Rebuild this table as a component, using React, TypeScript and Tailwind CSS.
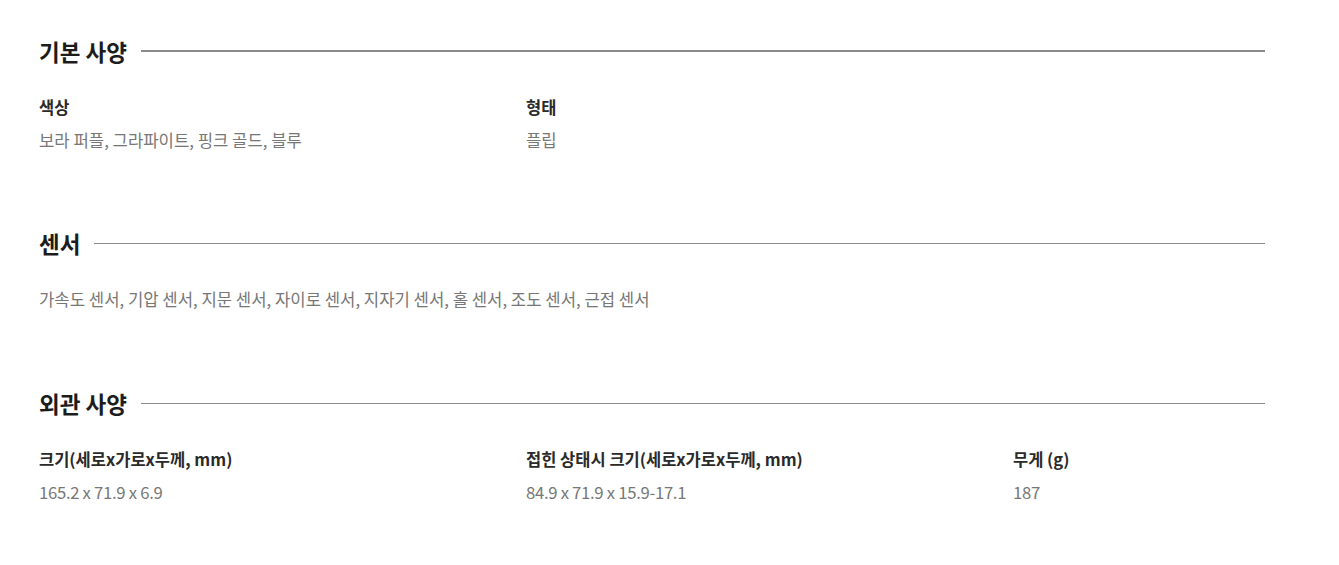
const font = { fontFamily: '"Noto Sans CJK KR", "Noto Sans", sans-serif' }

interface SpecItem {
  label: string
  value: string
  numeric?: boolean
}

function SectionTitle({ title, thick }: { title: string; thick?: boolean }) {
  return (
    <div className="flex items-center">
      <h2 className="text-[22.5px] leading-[28px] font-bold text-[#1c1c1c]">{title}</h2>
      <div className={`flex-1 ml-[14px] bg-[#8a8a8a] ${thick ? 'h-[2px]' : 'h-px'}`} />
    </div>
  )
}

function SpecGrid({ items }: { items: SpecItem[] }) {
  return (
    <div className="grid grid-cols-[487px_487px_1fr] mt-[30px]">
      {items.map((item) => (
        <div key={item.label}>
          <div className="text-[16.5px] leading-6 font-bold text-[#2a2a2a]">{item.label}</div>
          <div
            className={`mt-[9px] text-[16.7px] leading-6 text-[#777] ${item.numeric ? 'tracking-[-0.3px]' : ''}`}
          >
            {item.value}
          </div>
        </div>
      ))}
    </div>
  )
}

export default function App() {
  return (
    <div className="bg-white w-[1339px] h-[565px] pl-[39px] pr-[74px] pt-[37px]" style={font}>
      <section>
        <SectionTitle title="기본 사양" thick />
        <SpecGrid
          items={[
            { label: '색상', value: '보라 퍼플, 그라파이트, 핑크 골드, 블루' },
            { label: '형태', value: '플립' },
          ]}
        />
      </section>

      <section className="mt-[77px]">
        <SectionTitle title="센서" />
        <p className="mt-[30px] text-[16.7px] leading-6 text-[#777]">
          가속도 센서, 기압 센서, 지문 센서, 자이로 센서, 지자기 센서, 홀 센서, 조도 센서, 근접 센서
        </p>
      </section>

      <section className="mt-[78px]">
        <SectionTitle title="외관 사양" />
        <SpecGrid
          items={[
            { label: '크기(세로x가로x두께, mm)', value: '165.2 x 71.9 x 6.9', numeric: true },
            { label: '접힌 상태시 크기(세로x가로x두께, mm)', value: '84.9 x 71.9 x 15.9-17.1', numeric: true },
            { label: '무게 (g)', value: '187', numeric: true },
          ]}
        />
      </section>
    </div>
  )
}
